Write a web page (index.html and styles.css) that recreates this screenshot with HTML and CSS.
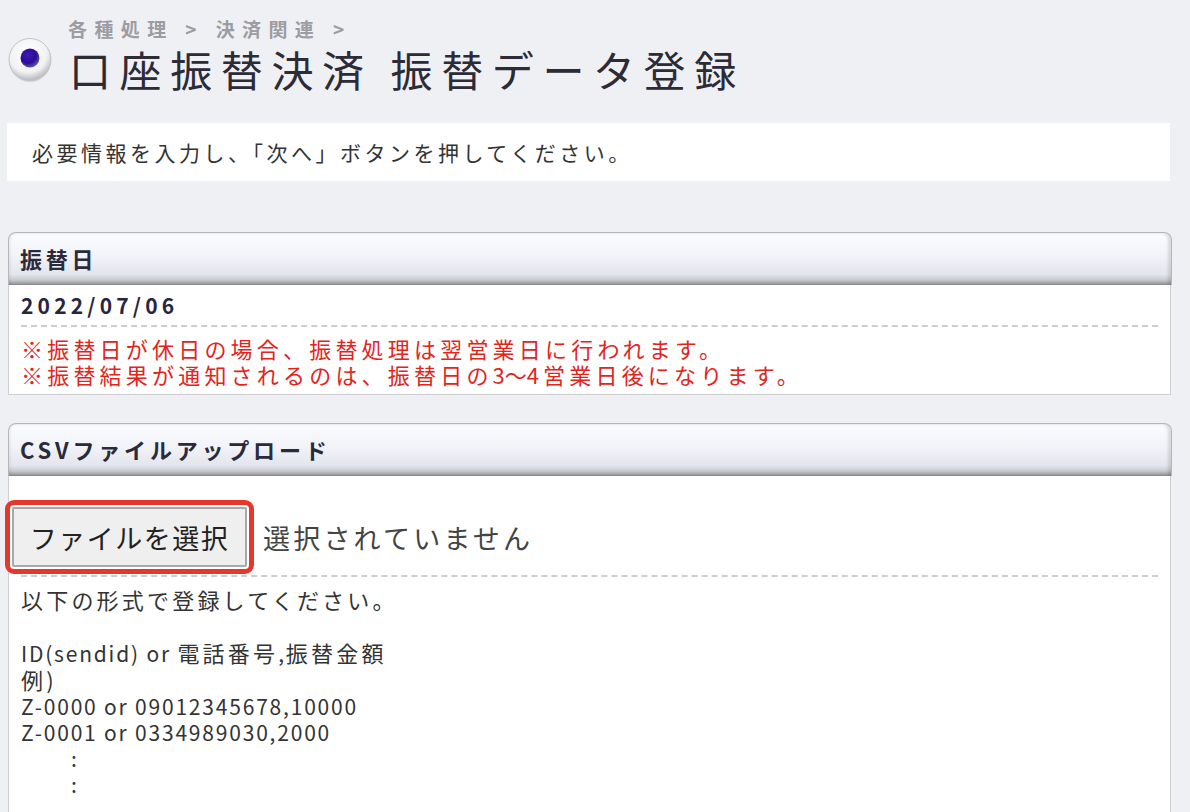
FILE: index.html
```html
<!DOCTYPE html>
<html lang="ja">
<head>
  <meta charset="UTF-8" />
  <meta name="viewport" content="width=device-width, initial-scale=1.0"/>
  <title>口座振替決済 振替データ登録</title>
  <link rel="stylesheet" href="styles.css">
</head>
<body>

  <div class="page">

    <!-- Page heading with breadcrumb -->
    <div class="page-head">
      <span class="head-icon">
        <svg width="46" height="46" viewBox="0 0 46 46">
          <defs>
            <radialGradient id="ball" cx="45%" cy="35%" r="65%">
              <stop offset="0%" stop-color="#ffffff"/>
              <stop offset="70%" stop-color="#f2f2f4"/>
              <stop offset="100%" stop-color="#b9b9be"/>
            </radialGradient>
            <radialGradient id="dot" cx="40%" cy="35%" r="70%">
              <stop offset="0%" stop-color="#3b1ab8"/>
              <stop offset="60%" stop-color="#2c0c96"/>
              <stop offset="100%" stop-color="#6a5cb0"/>
            </radialGradient>
          </defs>
          <circle cx="23" cy="24" r="21" fill="#000" opacity="0.12"/>
          <circle cx="23" cy="22.5" r="21" fill="url(#ball)" stroke="#c4c4c8" stroke-width="1"/>
          <circle cx="23" cy="21" r="9.5" fill="url(#dot)"/>
        </svg>
      </span>
      <div class="head-text">
        <p class="crumbs">各種処理 &gt; 決済関連 &gt;</p>
        <h1 class="page-title">口座振替決済 振替データ登録</h1>
      </div>
    </div>

    <p class="notice">必要情報を入力し、「次へ」ボタンを押してください。</p>

    <!-- Transfer date -->
    <section class="panel">
      <h2 class="panel-head">振替日</h2>
      <div class="panel-body">
        <div class="row date">2022/07/06</div>
        <div class="row note">
          ※振替日が休日の場合、振替処理は翌営業日に行われます。<br>
          ※振替結果が通知されるのは、振替日の<span class="num">3～4</span>営業日後になります。
        </div>
      </div>
    </section>

    <!-- CSV upload -->
    <section class="panel">
      <h2 class="panel-head">CSVファイルアップロード</h2>
      <div class="panel-body">
        <div class="row upload">
          <button class="file-btn" type="button">ファイルを選択</button>
          <span class="file-name">選択されていません</span>
        </div>
        <div class="row format">
          <span class="jp">以下の形式で登録してください。</span><br>
          <br>
          ID(sendid) or <span class="jp">電話番号</span>,<span class="jp">振替金額</span><br>
          <span class="jp">例)</span><br>
          Z-0000 or 09012345678,10000<br>
          Z-0001 or 0334989030,2000<br>
          <span class="dots">:</span><br>
          <span class="dots">:</span>
        </div>
      </div>
    </section>

  </div>

</body>
</html>
```

FILE: styles.css
```css
body {
  margin: 0;
  background: #eff0f4;
  font-family: "Noto Sans CJK JP", "Noto Sans", sans-serif;
  color: #333;
  overflow: hidden;
}

.page {
  margin: 0 18px 0 7px;
}

/* Heading */
.page-head {
  display: flex;
  align-items: flex-start;
  padding-top: 19px;
  height: 104px;
  box-sizing: border-box;
}

.head-icon {
  margin-top: 18px;
  margin-right: 18px;
  width: 46px;
  height: 46px;
}

.crumbs {
  margin: 0 0 0 -3px;
  font-size: 19px;
  line-height: 20px;
  font-weight: bold;
  letter-spacing: 7.4px;
  color: #9c9ca2;
}

.page-title {
  margin: 8px 0 0 -2px;
  font-size: 42px;
  line-height: 44px;
  font-weight: normal;
  letter-spacing: 8.6px;
  color: #2c2b36;
}

/* Info line */
.notice {
  margin: 19px 2px 0 0;
  height: 58px;
  line-height: 58px;
  padding-left: 25px;
  background: #fff;
  font-size: 21px;
  letter-spacing: 3.5px;
  color: #333;
}

/* Panels */
.panel {
  margin: 51px 0 0 1px;
}

.panel + .panel {
  margin-top: 28px;
}

.panel-head {
  margin: 0;
  height: 53px;
  box-sizing: border-box;
  padding-left: 11px;
  line-height: 51px;
  font-size: 22px;
  font-weight: bold;
  letter-spacing: 3.8px;
  color: #2b2a3a;
  border: 1px solid #b5b6ba;
  border-bottom: none;
  border-radius: 8px 8px 0 0;
  background: linear-gradient(to bottom, #fbfcfe 0%, #f1f3f8 45%, #e3e5ec 80%, #c9cbd1 90%, #8e8f94 100%);
  box-shadow: inset -3px 0 3px rgba(0, 0, 0, 0.12), inset 2px 0 2px rgba(0, 0, 0, 0.05);
}

.panel-body {
  background: #fff;
  border: 1px solid #cfcfd2;
  border-top: none;
  margin-right: 1px;
  padding: 0 12px;
}

.row + .row {
  border-top: 2px dashed #cdcdd0;
}

.date {
  height: 40px;
  line-height: 40px;
  font-size: 21px;
  font-weight: bold;
  letter-spacing: 4.2px;
  color: #29253e;
}

.note {
  padding: 8px 0 7px;
  font-size: 22px;
  line-height: 26px;
  letter-spacing: 4.2px;
  color: #e3241c;
}

.note .num {
  letter-spacing: 0;
  margin-right: 4px;
}

/* File picker */
.upload {
  display: flex;
  align-items: center;
  gap: 16px;
  padding: 31px 0 8px;
  margin-left: -9px;
}

.file-btn {
  width: 235px;
  height: 60px;
  padding: 0;
  font-family: inherit;
  font-size: 27px;
  letter-spacing: 1.5px;
  color: #222;
  background: #efefef;
  border: 2px solid #a9a9ab;
  border-radius: 2px;
  outline: 5px solid #e5372b;
  outline-offset: 2px;
}

.file-name {
  font-size: 27px;
  letter-spacing: 3.2px;
  color: #444;
}

.format {
  padding: 9px 0 20px;
  font-size: 21px;
  line-height: 26px;
  letter-spacing: 1.8px;
  color: #333;
}

.format .jp {
  font-size: 22px;
  letter-spacing: 3.2px;
}

.dots {
  padding-left: 50px;
}
```
